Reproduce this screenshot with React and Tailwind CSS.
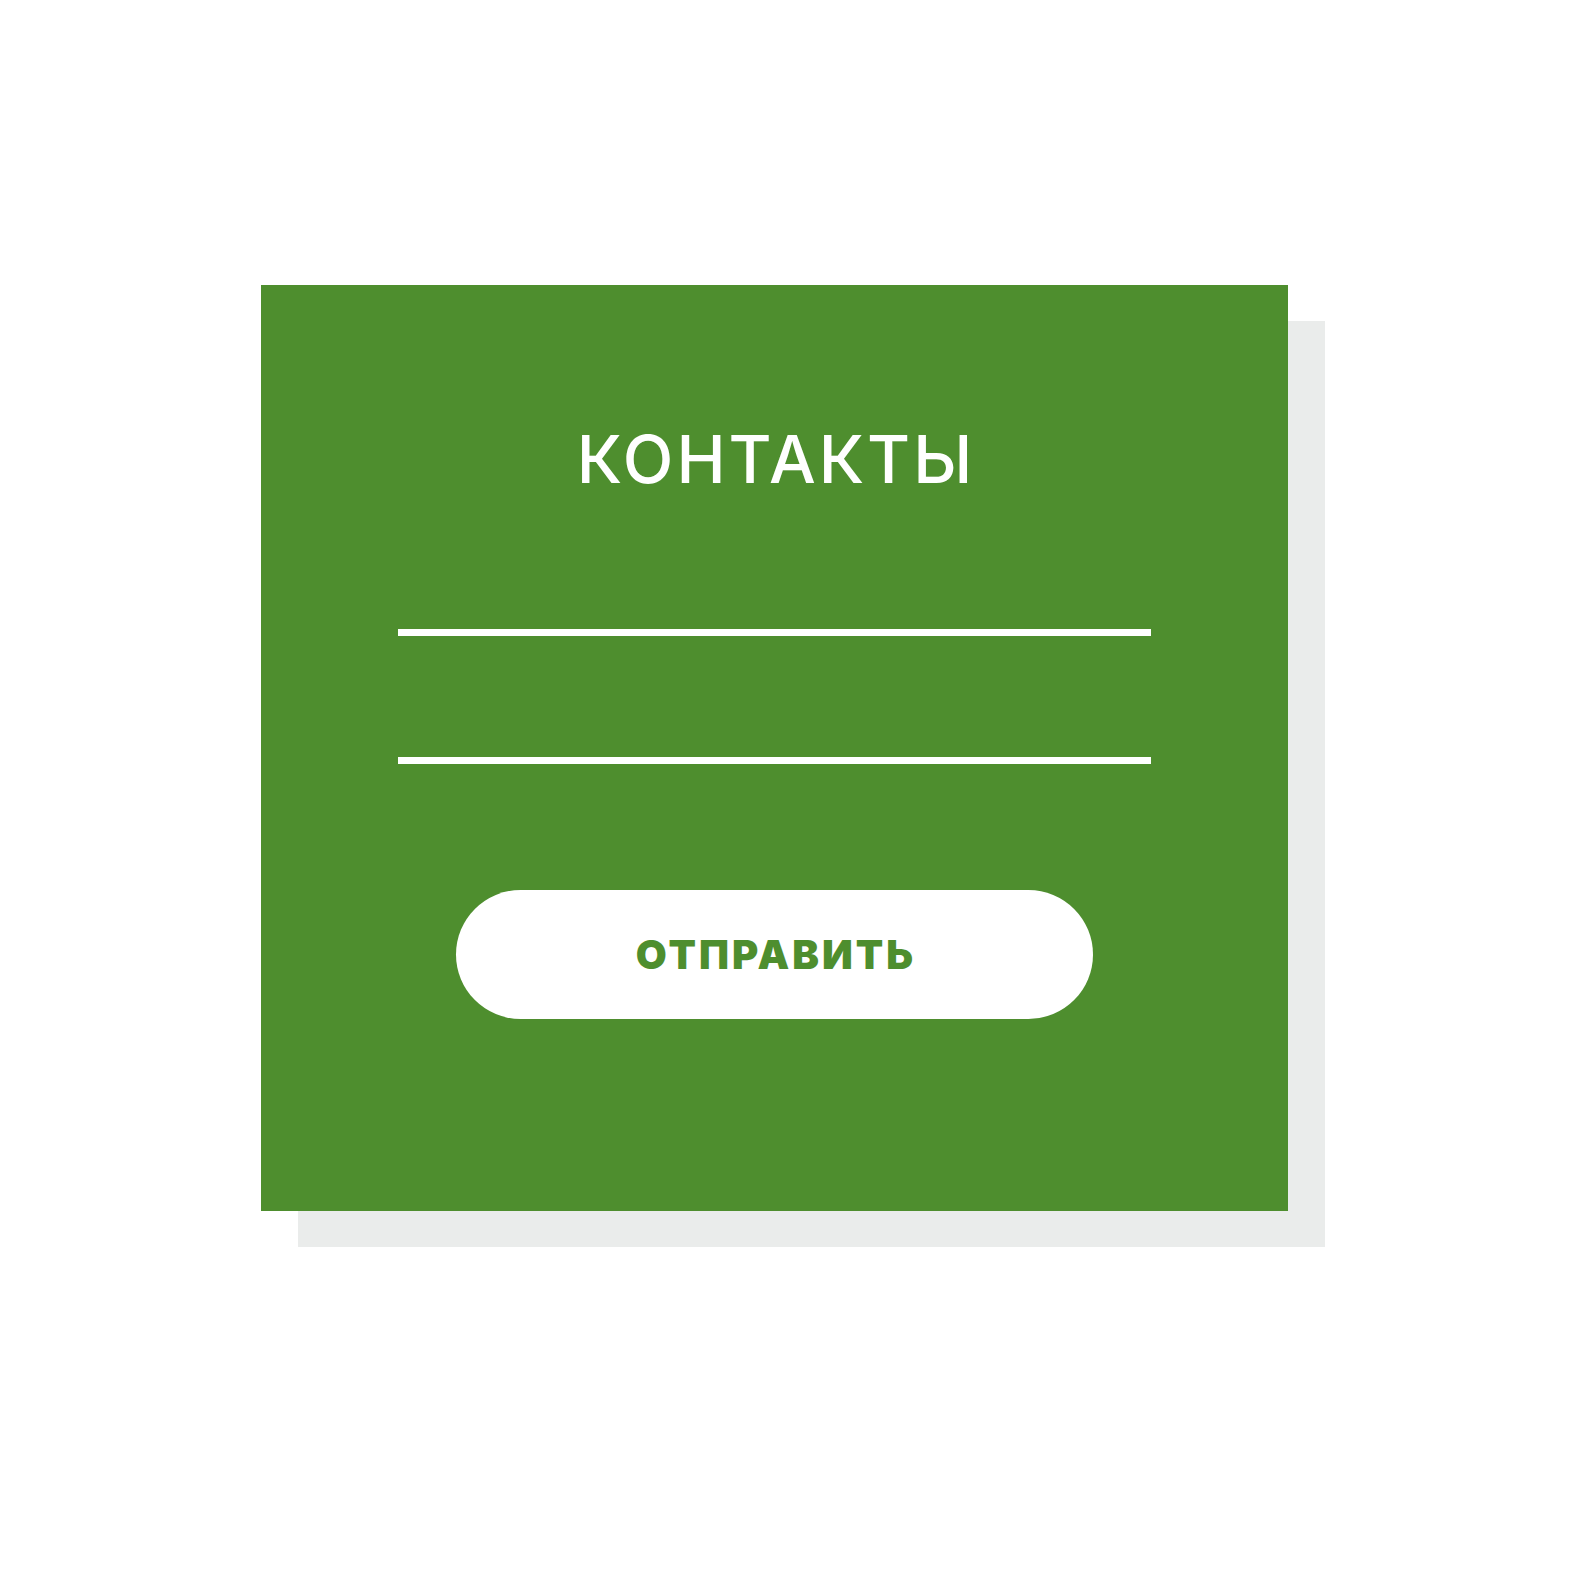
import React from 'react';

const App = () => {
  return (
    <div className="min-h-[1571px] bg-white pt-[285px] pl-[261px]" style={{ fontFamily: 'Inter, "Noto Sans", sans-serif' }}>
      {/* card with flat offset shadow */}
      <div className="w-[1027px] h-[926px] bg-[#4e8e2e] shadow-[37px_36px_0_#eaeceb] flex flex-col items-center px-[137px]">
        <h1 className="mt-[141px] pl-[3px] text-[66px] leading-none font-medium text-white tracking-[3px]">
          КОНТАКТЫ
        </h1>

        <div className="w-full mt-[137px] h-[7px] bg-white" />
        <div className="w-full mt-[121px] h-[7px] bg-white" />

        <button className="mt-[126px] w-[637px] h-[129px] rounded-full bg-white flex items-center justify-center">
          <span className="pl-[3px] text-[40px] font-black text-[#4e8e2e] leading-none tracking-[3px]">ОТПРАВИТЬ</span>
        </button>
      </div>
    </div>
  );
};

export default App;
